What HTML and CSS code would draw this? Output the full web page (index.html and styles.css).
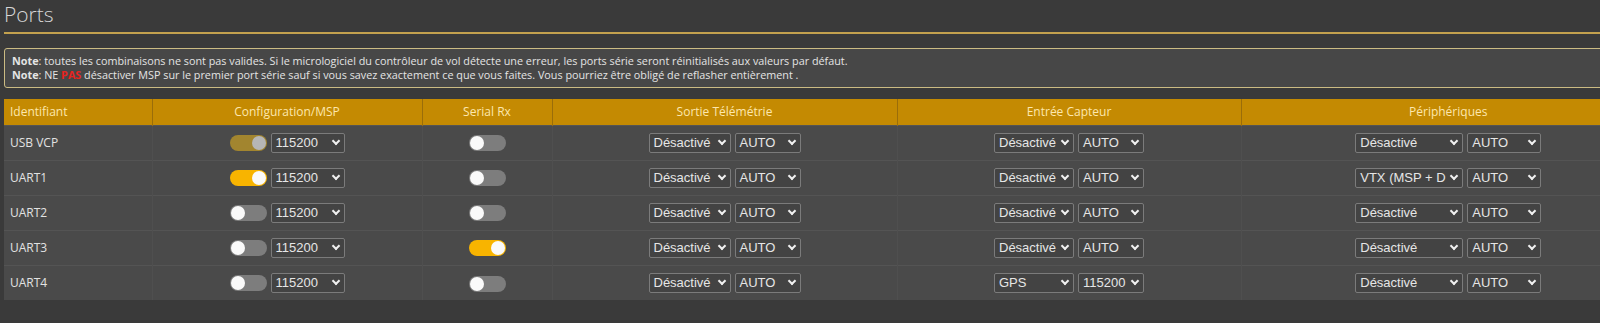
FILE: index.html
```html
<!DOCTYPE html>
<html lang="fr">
<head>
    <meta charset="UTF-8">
    <title>Ports</title>
    <link rel="stylesheet" href="styles.css">
</head>
<body>
    <div class="tab-ports">
        <div class="tab-title">Ports</div>

        <div class="note">
            <p><b>Note</b>: toutes les combinaisons ne sont pas valides. Si le micrologiciel du contrôleur de vol détecte une erreur, les ports série seront réinitialisés aux valeurs par défaut.</p>
            <p><b>Note</b>: NE <span class="warn">PAS</span> désactiver MSP sur le premier port série sauf si vous savez exactement ce que vous faites. Vous pourriez être obligé de reflasher entièrement .</p>
        </div>

        <table class="ports">
            <colgroup>
                <col style="width:148px">
                <col style="width:270px">
                <col style="width:130px">
                <col style="width:345px">
                <col style="width:344px">
                <col style="width:414px">
            </colgroup>
            <thead>
                <tr>
                    <th class="left">Identifiant</th>
                    <th>Configuration/MSP</th>
                    <th>Serial Rx</th>
                    <th>Sortie Télémétrie</th>
                    <th>Entrée Capteur</th>
                    <th>Périphériques</th>
                </tr>
            </thead>
            <tbody>
                <tr>
                    <td class="left">USB VCP</td>
                    <td><span class="switch on locked"></span><span class="sel w74">115200<i></i></span></td>
                    <td><span class="switch"></span></td>
                    <td><span class="sel w82">Désactivé<i></i></span><span class="sel w66">AUTO<i></i></span></td>
                    <td><span class="sel w80">Désactivé<i></i></span><span class="sel w66">AUTO<i></i></span></td>
                    <td><span class="sel w108">Désactivé<i></i></span><span class="sel w74">AUTO<i></i></span></td>
                </tr>
                <tr>
                    <td class="left">UART1</td>
                    <td><span class="switch on"></span><span class="sel w74">115200<i></i></span></td>
                    <td><span class="switch"></span></td>
                    <td><span class="sel w82">Désactivé<i></i></span><span class="sel w66">AUTO<i></i></span></td>
                    <td><span class="sel w80">Désactivé<i></i></span><span class="sel w66">AUTO<i></i></span></td>
                    <td><span class="sel w108">VTX (MSP + D<i></i></span><span class="sel w74">AUTO<i></i></span></td>
                </tr>
                <tr>
                    <td class="left">UART2</td>
                    <td><span class="switch"></span><span class="sel w74">115200<i></i></span></td>
                    <td><span class="switch"></span></td>
                    <td><span class="sel w82">Désactivé<i></i></span><span class="sel w66">AUTO<i></i></span></td>
                    <td><span class="sel w80">Désactivé<i></i></span><span class="sel w66">AUTO<i></i></span></td>
                    <td><span class="sel w108">Désactivé<i></i></span><span class="sel w74">AUTO<i></i></span></td>
                </tr>
                <tr>
                    <td class="left">UART3</td>
                    <td><span class="switch"></span><span class="sel w74">115200<i></i></span></td>
                    <td><span class="switch on"></span></td>
                    <td><span class="sel w82">Désactivé<i></i></span><span class="sel w66">AUTO<i></i></span></td>
                    <td><span class="sel w80">Désactivé<i></i></span><span class="sel w66">AUTO<i></i></span></td>
                    <td><span class="sel w108">Désactivé<i></i></span><span class="sel w74">AUTO<i></i></span></td>
                </tr>
                <tr>
                    <td class="left">UART4</td>
                    <td><span class="switch"></span><span class="sel w74">115200<i></i></span></td>
                    <td><span class="switch"></span></td>
                    <td><span class="sel w82">Désactivé<i></i></span><span class="sel w66">AUTO<i></i></span></td>
                    <td><span class="sel w80">GPS<i></i></span><span class="sel w66">115200<i></i></span></td>
                    <td><span class="sel w108">Désactivé<i></i></span><span class="sel w74">AUTO<i></i></span></td>
                </tr>
            </tbody>
        </table>
    </div>
</body>
</html>
```

FILE: styles.css
```css
*{
    padding: 0;
    margin: 0;
    box-sizing: border-box;
}
html,body{
    background-color: #3a3a3a;
    overflow: hidden;
}
body{
    font-family: "Open Sans", "Liberation Sans", sans-serif;
    color: #e2e2e2;
}
.tab-ports{
    width: 1651px;
    margin-left: 4px;
}
.tab-title{
    height: 34px;
    font-size: 21px;
    font-weight: 300;
    line-height: 29px;
    color: #d6d6d6;
    border-bottom: 2px solid #c3a14e;
}

/* note */
.note{
    margin-top: 14px;
    padding: 5px 7px;
    background-color: #474747;
    border: 1px solid #cbbb83;
    border-radius: 3px;
    font-size: 10.8px;
    line-height: 14px;
    color: #e4e4e4;
}
.note b{
    font-weight: 700;
}
.note .warn{
    color: #e8231f;
    font-weight: 700;
}

/* table */
.ports{
    width: 1651px;
    margin-top: 11px;
    border-collapse: collapse;
    table-layout: fixed;
}
.ports th{
    height: 26px;
    background-color: #c48a02;
    color: #fde7ad;
    font-size: 12px;
    font-weight: 400;
    text-align: center;
    border-left: 1px solid #9a6d0a;
}
.ports td{
    height: 35px;
    background-color: #4a4a4a;
    font-size: 12px;
    text-align: center;
    border-top: 1px solid #545454;
    border-left: 1px solid #4f4f4f;
    white-space: nowrap;
}
.ports th.left,
.ports td.left{
    text-align: left;
    padding-left: 6px;
    border-left: none;
}
.ports td > span{
    vertical-align: middle;
}

/* fake selects */
.sel{
    display: inline-flex;
    align-items: center;
    justify-content: space-between;
    height: 20px;
    padding: 0 4px 0 4px;
    margin-left: 4px;
    background-color: #434343;
    border: 1px solid #7b7b7b;
    border-radius: 2px;
    font-family: "Liberation Sans", Arial, sans-serif;
    font-size: 13px;
    color: #e6e6e6;
    overflow: hidden;
    text-align: left;
}
.sel:first-child{
    margin-left: 0;
}
.sel i{
    flex: none;
    width: 6px;
    height: 6px;
    margin: -3px 1px 0 3px;
    border-right: 2px solid #f0f0f0;
    border-bottom: 2px solid #f0f0f0;
    transform: rotate(45deg);
}
.w66{ width: 66px; }
.w74{ width: 74px; }
.w80{ width: 80px; }
.w82{ width: 82px; }
.w108{ width: 108px; }

/* switches */
.switch{
    display: inline-block;
    position: relative;
    width: 37px;
    height: 16px;
    border-radius: 8px;
    background-color: #7d7d7d;
}
.switch::after{
    content: "";
    position: absolute;
    top: 1px;
    left: 1px;
    width: 14px;
    height: 14px;
    border-radius: 50%;
    background-color: #fafafa;
}
.switch.on{
    background-color: #f8b400;
}
.switch.on::after{
    left: auto;
    right: 1px;
}
.switch.locked{
    background-color: #a2852f;
}
.switch.locked::after{
    background-color: #b6b6b6;
}
```
